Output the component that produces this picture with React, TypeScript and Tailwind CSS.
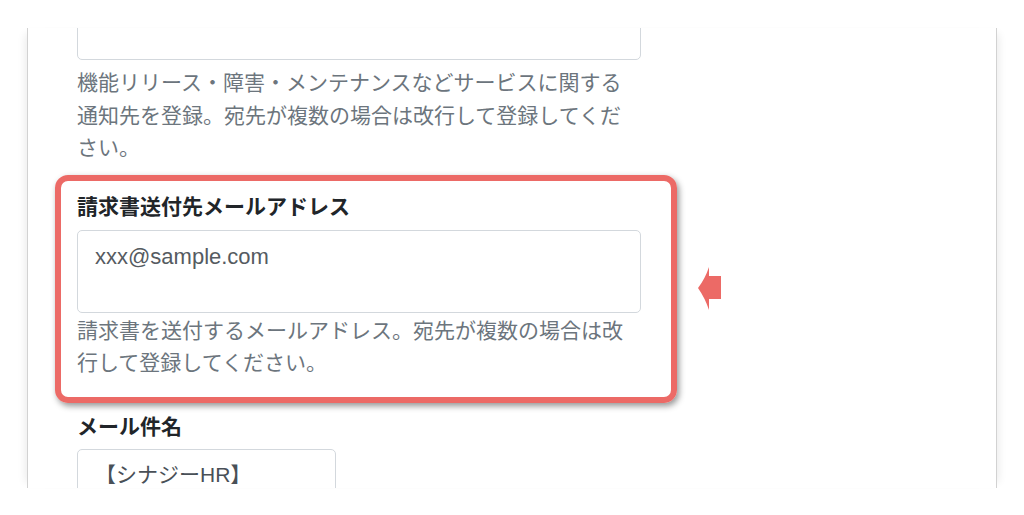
const font = '[font-family:"Liberation_Sans","Noto_Sans_CJK_JP",sans-serif]';

function Help({ children, tall }: { children: React.ReactNode; tall?: boolean }) {
  return (
    <p className={`text-[21px] text-[#6c757d] ${tall ? 'leading-[32.5px]' : 'leading-[32px]'}`}>{children}</p>
  );
}

function Label({ children }: { children: React.ReactNode }) {
  return <p className="text-[21px] font-bold leading-[32px] text-[#212529]">{children}</p>;
}

function LeftArrow() {
  return (
    <svg width="26" height="44" viewBox="0 0 26 44" className="block">
      <path d="M0 21 Q7 12 11 0 L11 9 L23 9 L23 32 L11 32 L11 43 Q7 31 0 21 Z" fill="#ec6a66" />
    </svg>
  );
}

export default function App() {
  return (
    <div className={`h-[515px] w-[1024px] overflow-hidden bg-white pt-[28px] ${font}`}>
      <div className="mx-[27px] h-[460px] overflow-hidden border-x border-[#d2d2d2] bg-white shadow-[-8px_0_8px_-6px_rgba(0,0,0,0.08),8px_0_8px_-6px_rgba(0,0,0,0.08)]">
        <div className="relative flow-root pl-[49px]">
          <div className="w-[564px]">
            <div className="-mt-[51px] h-[83px] rounded-[5px] border border-[#d3d8dd] bg-white" />
            <div className="mt-[7px]">
              <Help tall>機能リリース・障害・メンテナンスなどサービスに関する通知先を登録。宛先が複数の場合は改行して登録してください。</Help>
            </div>

            <div className="-ml-[22px] mt-[10px] w-[622px] rounded-[13px] border-[6px] border-[#ec6a66] pb-[18px] pl-[16px] pr-[30px] pt-[10px] shadow-[2px_3px_6px_rgba(0,0,0,0.42)]">
              <Label>請求書送付先メールアドレス</Label>
              <div className="mt-[7px] h-[83px] rounded-[5px] border border-[#d3d8dd] bg-white px-[17px] pt-[10px] text-[22px] leading-[32px] text-[#555b61]">
                xxx@sample.com
              </div>
              <div className="mt-[2px]">
                <Help>請求書を送付するメールアドレス。宛先が複数の場合は改行して登録してください。</Help>
              </div>
            </div>

            <div className="mt-[8px]">
              <Label>メール件名</Label>
            </div>
            <div className="mt-[6px] h-[52px] w-[259px] rounded-[5px] border border-[#d3d8dd] bg-white px-[17px] pt-[9px] text-[21px] leading-[32px] text-[#495057]">
              【シナジーHR】
            </div>
          </div>
          <div className="absolute left-[670px] top-[239px]">
            <LeftArrow />
          </div>
        </div>
      </div>
    </div>
  );
}
